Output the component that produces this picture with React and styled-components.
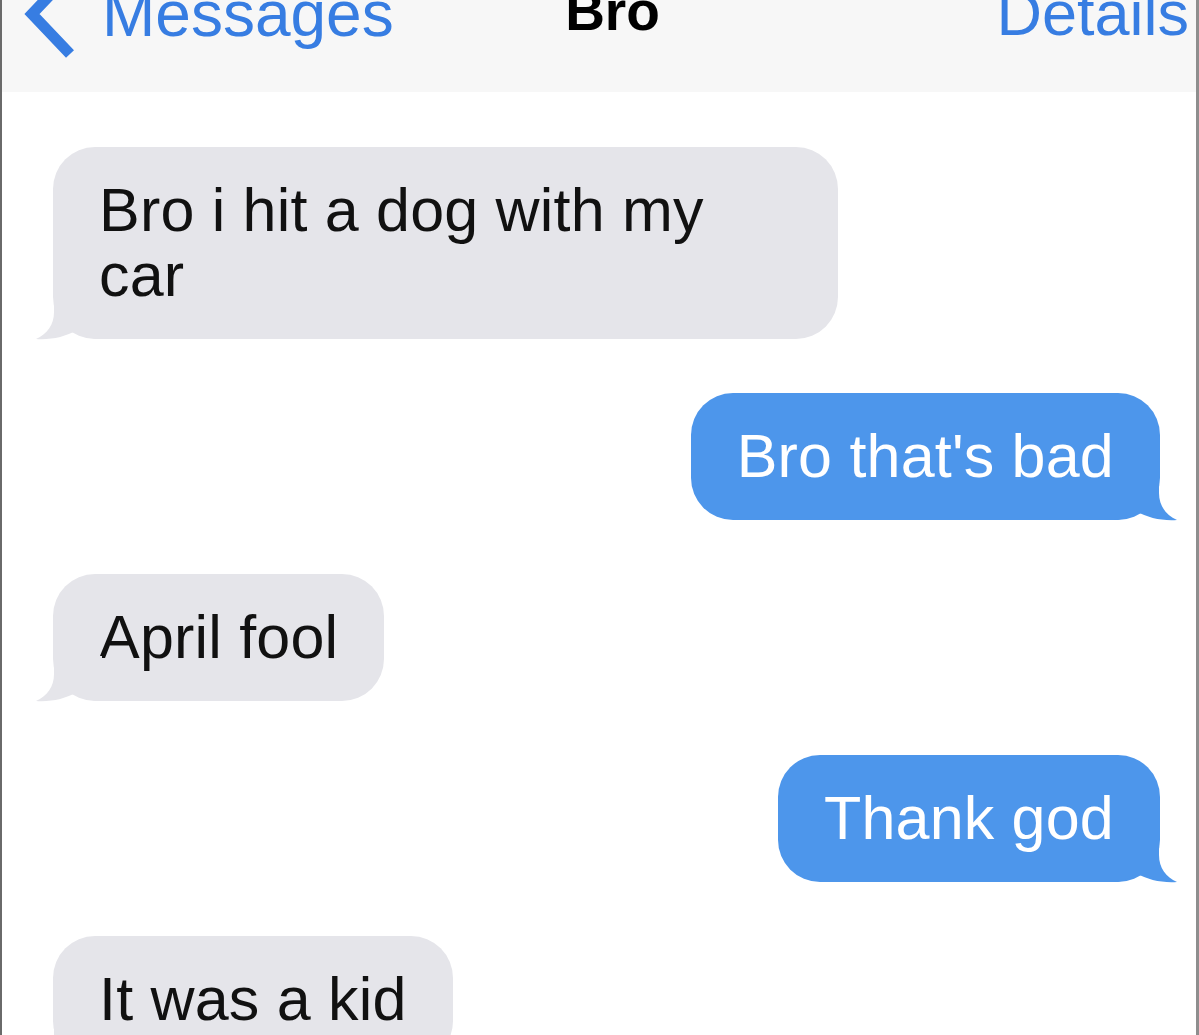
import React from 'react';
import styled, { createGlobalStyle } from 'styled-components';

const GlobalStyle = createGlobalStyle`
    html, body {
        margin: 0;
        padding: 0;
        background: #ffffff;
    }
    * {
        box-sizing: border-box;
    }
`;

const StyledScreen = styled.div`
    width: 1199px;
    height: 1035px;
    overflow: hidden;
    background: #ffffff;
    border-left: 2px solid #6a6a6a;
    border-right: 3px solid #8e8e8e;
    font-family: 'Liberation Sans', Arial, sans-serif;
    display: flex;
    flex-direction: column;
`;

const StyledNavBar = styled.header`
    height: 92px;
    flex-shrink: 0;
    background: #f7f7f7;
    overflow: hidden;
`;

const StyledNavRow = styled.div`
    margin-top: -18px;
    display: grid;
    grid-template-columns: 1fr auto 1fr;
    align-items: flex-start;
    padding: 0 7px 0 20px;
    line-height: 1;
`;

const StyledBackLink = styled.a`
    display: flex;
    align-items: flex-start;
    gap: 24px;
    color: #377de2;
    font-size: 64px;
    text-decoration: none;

    svg {
        margin-top: -10px;
        flex-shrink: 0;
    }
`;

const StyledTitle = styled.h1`
    margin: 0;
    padding-left: 14px;
    font-size: 55px;
    font-weight: bold;
    color: #000000;
    line-height: 1;
    margin-top: 2px;
`;

const StyledDetails = styled.a`
    justify-self: end;
    color: #377de2;
    font-size: 63px;
    text-decoration: none;
`;

const StyledThread = styled.main`
    display: flex;
    flex-direction: column;
    gap: 54px;
    padding: 55px 36px 0 51px;
`;

const StyledBubble = styled.div`
    position: relative;
    align-self: ${props => props.$mine ? 'flex-end' : 'flex-start'};
    max-width: 785px;
    padding: 31px 46px;
    border-radius: 42px;
    font-size: 61px;
    letter-spacing: 0.2px;
    line-height: 65px;
    background: ${props => props.$mine ? '#4d96eb' : '#e5e5ea'};
    color: ${props => props.$mine ? '#ffffff' : '#111111'};

    svg {
        position: absolute;
        bottom: -1px;
        ${props => props.$mine ? 'right: -17px; transform: scaleX(-1);' : 'left: -17px;'}
    }
`;

const Chevron = () => (
    <svg width="56" height="86" viewBox="0 0 56 86">
        <path d="M48 2 L10 42 L48 82" fill="none" stroke="#377de2" strokeWidth="11" strokeLinecap="butt" strokeLinejoin="miter" />
    </svg>
);

const Tail = ({ color }) => (
    <svg width="66" height="46" viewBox="0 0 66 46">
        <path d="M18 0 L18 18 C18 31 11 40 0 45 C15 46 29 43 41 36 C47 42 55 45 66 45 L66 0 Z" fill={color} />
    </svg>
);

const messages = [
    { text: 'Bro i hit a dog with my car', mine: false },
    { text: "Bro that's bad", mine: true },
    { text: 'April fool', mine: false },
    { text: 'Thank god', mine: true },
    { text: 'It was a kid', mine: false },
];

const App = () => {
    return (
        <>
            <GlobalStyle />
            <StyledScreen>
                <StyledNavBar>
                    <StyledNavRow>
                        <StyledBackLink>
                            <Chevron />
                            Messages
                        </StyledBackLink>
                        <StyledTitle>Bro</StyledTitle>
                        <StyledDetails>Details</StyledDetails>
                    </StyledNavRow>
                </StyledNavBar>
                <StyledThread>
                    {messages.map((m, i) => (
                        <StyledBubble key={i} $mine={m.mine}>
                            <Tail color={m.mine ? '#4d96eb' : '#e5e5ea'} />
                            {m.text}
                        </StyledBubble>
                    ))}
                </StyledThread>
            </StyledScreen>
        </>
    );
}

export default App;
